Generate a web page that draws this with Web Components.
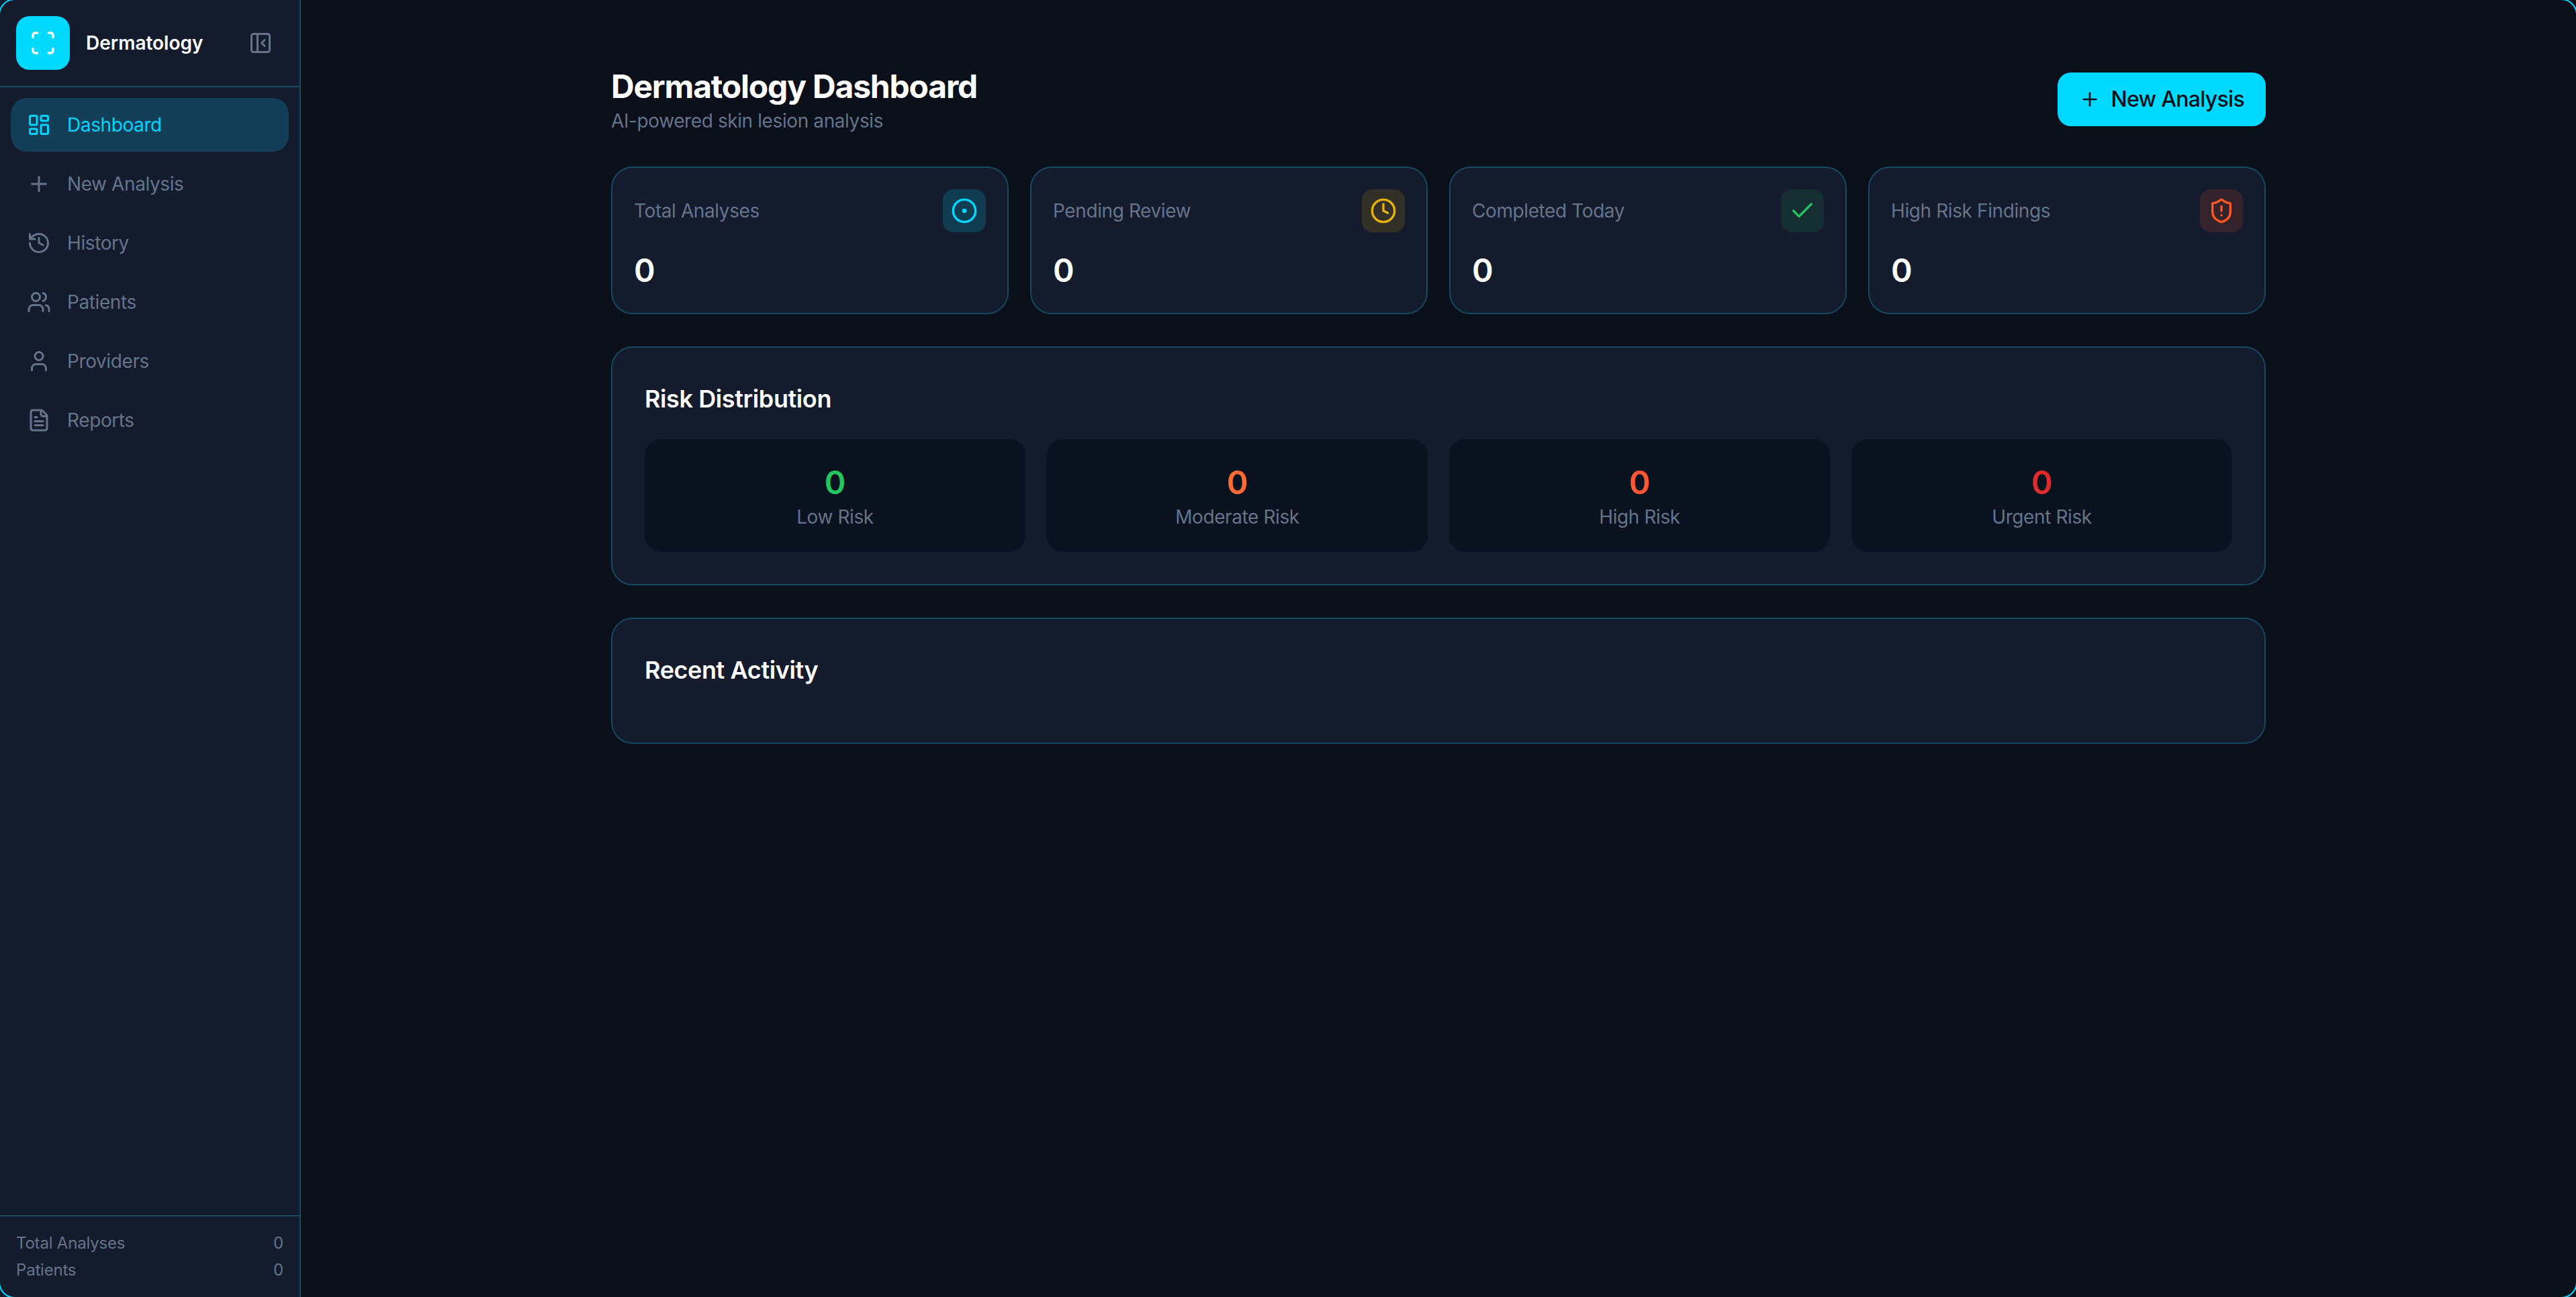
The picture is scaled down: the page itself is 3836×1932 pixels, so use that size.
<!DOCTYPE html>
<html lang="en">
<head>
<meta charset="utf-8">
<title>Dermatology Dashboard</title>
<style>
  html, body { margin: 0; height: 100%; background: #0a0f1a; overflow: hidden; }
  body { font-family: Inter, "Liberation Sans", sans-serif; color: #fff; }
</style>
</head>
<body>
<derm-app></derm-app>

<script>
const ICONS = {
  scan: '<path d="M3 7V5a2 2 0 0 1 2-2h2"/><path d="M17 3h2a2 2 0 0 1 2 2v2"/><path d="M21 17v2a2 2 0 0 1-2 2h-2"/><path d="M7 21H5a2 2 0 0 1-2-2v-2"/>',
  collapse: '<rect width="18" height="18" x="3" y="3" rx="2"/><path d="M9 3v18"/><path d="m16 15-3-3 3-3"/>',
  dashboard: '<rect width="7" height="9" x="3" y="3" rx="1"/><rect width="7" height="5" x="14" y="3" rx="1"/><rect width="7" height="9" x="14" y="12" rx="1"/><rect width="7" height="5" x="3" y="16" rx="1"/>',
  plus: '<path d="M5 12h14"/><path d="M12 5v14"/>',
  history: '<path d="M3 12a9 9 0 1 0 9-9 9.75 9.75 0 0 0-6.74 2.74L3 8"/><path d="M3 3v5h5"/><path d="M12 7v5l4 2"/>',
  users: '<path d="M16 21v-2a4 4 0 0 0-4-4H6a4 4 0 0 0-4 4v2"/><circle cx="9" cy="7" r="4"/><path d="M22 21v-2a4 4 0 0 0-3-3.87"/><path d="M16 3.13a4 4 0 0 1 0 7.75"/>',
  user: '<path d="M19 21v-2a4 4 0 0 0-4-4H9a4 4 0 0 0-4 4v2"/><circle cx="12" cy="7" r="4"/>',
  file: '<path d="M15 2H6a2 2 0 0 0-2 2v16a2 2 0 0 0 2 2h12a2 2 0 0 0 2-2V7Z"/><path d="M14 2v4a2 2 0 0 0 2 2h4"/><path d="M10 9H8"/><path d="M16 13H8"/><path d="M16 17H8"/>',
  target: '<circle cx="12" cy="12" r="10"/><circle cx="12" cy="12" r="1"/>',
  clock: '<circle cx="12" cy="12" r="10"/><path d="M12 6v6l4 2"/>',
  check: '<path d="M20 6 9 17l-5-5"/>',
  shield: '<path d="M20 13c0 5-3.5 7.5-7.66 8.95a1 1 0 0 1-.67-.01C7.5 20.5 4 18 4 13V6a1 1 0 0 1 1-1c2 0 4.5-1.2 6.24-2.72a1.17 1.17 0 0 1 1.52 0C14.51 3.81 17 5 19 5a1 1 0 0 1 1 1z"/><path d="M12 8v4"/><path d="M12 16h.01"/>'
};

function icon(name, size, width = 2) {
  return `<svg xmlns="http://www.w3.org/2000/svg" width="${size}" height="${size}" viewBox="0 0 24 24" fill="none" stroke="currentColor" stroke-width="${width}" stroke-linecap="round" stroke-linejoin="round">${ICONS[name]}</svg>`;
}

class NavItem extends HTMLElement {
  connectedCallback() {
    this.attachShadow({ mode: 'open' });
    this.shadowRoot.innerHTML = `
      <style>
        :host {
          display: flex;
          align-items: center;
          gap: 24px;
          height: 80px;
          padding: 0 24px;
          border-radius: 24px;
          color: #64748b;
          font-size: 28px;
          letter-spacing: -0.4px;
          line-height: 40px;
        }
        :host([active]) { background: #123f57; color: #00d4ff; }
        svg { display: block; flex: none; }
      </style>
      ${icon(this.getAttribute('icon'), 36)}
      <slot></slot>
    `;
  }
}

class StatRow extends HTMLElement {
  connectedCallback() {
    this.attachShadow({ mode: 'open' });
    this.shadowRoot.innerHTML = `
      <style>
        :host {
          display: flex;
          justify-content: space-between;
          color: #64748b;
          font-size: 24px;
          letter-spacing: -0.2px;
          line-height: 32px;
        }
      </style>
      <slot></slot>
      <span>${this.getAttribute('value')}</span>
    `;
  }
}

class SideBar extends HTMLElement {
  connectedCallback() {
    this.attachShadow({ mode: 'open' });
    this.shadowRoot.innerHTML = `
      <style>
        :host {
          display: flex;
          flex-direction: column;
          flex: none;
          box-sizing: border-box;
          width: 448px;
          height: 100%;
          background: #141b2d;
          border-right: 2px solid #134a60;
        }
        header {
          display: flex;
          align-items: center;
          box-sizing: border-box;
          height: 130px;
          padding: 0 24px;
          gap: 24px;
          border-bottom: 2px solid #134a60;
        }
        .logo {
          display: flex;
          align-items: center;
          justify-content: center;
          width: 80px;
          height: 80px;
          border-radius: 20px;
          background: #00d9ff;
          color: #fff;
        }
        .name { flex: 1; font-size: 28px; font-weight: 600; line-height: 40px; }
        .collapse { display: block; margin-right: 16px; color: #64748b; }
        nav { flex: 1; display: flex; flex-direction: column; gap: 8px; padding: 16px; }
        footer {
          display: flex;
          flex-direction: column;
          gap: 8px;
          padding: 24px;
          border-top: 2px solid #134a60;
        }
        svg { display: block; }
      </style>
      <header>
        <div class="logo">${icon('scan', 40)}</div>
        <div class="name">Dermatology</div>
        <div class="collapse">${icon('collapse', 36)}</div>
      </header>
      <nav><slot></slot></nav>
      <footer><slot name="footer"></slot></footer>
    `;
  }
}

class StatCard extends HTMLElement {
  connectedCallback() {
    this.attachShadow({ mode: 'open' });
    const tone = this.getAttribute('tone');
    const wash = this.getAttribute('wash') || 15;
    this.shadowRoot.innerHTML = `
      <style>
        :host {
          display: block;
          box-sizing: border-box;
          padding: 32px;
          background: #141b2d;
          border: 2px solid #134a60;
          border-radius: 32px;
        }
        .top { display: flex; justify-content: space-between; align-items: center; }
        .label { color: #64748b; font-size: 28px; letter-spacing: -0.4px; line-height: 40px; }
        .badge {
          display: flex;
          align-items: center;
          justify-content: center;
          width: 64px;
          height: 64px;
          border-radius: 16px;
          color: ${tone};
          background: color-mix(in srgb, ${tone} ${wash}%, transparent);
        }
        .value { margin: 24px 0 -2px; font-size: 48px; font-weight: 600; line-height: 66px; color: #fff; }
        svg { display: block; }
      </style>
      <div class="top">
        <div class="label"><slot></slot></div>
        <div class="badge">${icon(this.getAttribute('icon'), 40)}</div>
      </div>
      <div class="value">${this.getAttribute('value')}</div>
    `;
  }
}

class RiskTile extends HTMLElement {
  connectedCallback() {
    this.attachShadow({ mode: 'open' });
    this.shadowRoot.innerHTML = `
      <style>
        :host {
          display: block;
          box-sizing: border-box;
          padding: 32px 24px;
          text-align: center;
          background: #0b121f;
          border-radius: 24px;
        }
        .value { margin-bottom: -2px; font-size: 48px; font-weight: 600; line-height: 66px; color: ${this.getAttribute('tone')}; }
        .label { color: #64748b; font-size: 28px; letter-spacing: -0.4px; line-height: 40px; }
      </style>
      <div class="value">${this.getAttribute('value')}</div>
      <div class="label"><slot></slot></div>
    `;
  }
}

class PanelCard extends HTMLElement {
  connectedCallback() {
    this.attachShadow({ mode: 'open' });
    this.shadowRoot.innerHTML = `
      <style>
        :host {
          display: block;
          box-sizing: border-box;
          padding: 48px;
          background: #141b2d;
          border: 2px solid #134a60;
          border-radius: 32px;
        }
        h2 { margin: 0 0 32px; font-size: 36px; font-weight: 600; letter-spacing: -0.4px; line-height: 56px; color: #fff; }
        .body { display: grid; grid-template-columns: repeat(4, 1fr); gap: 32px; }
      </style>
      <h2>${this.getAttribute('heading')}</h2>
      <div class="body"><slot></slot></div>
    `;
  }
}

class PageHeader extends HTMLElement {
  connectedCallback() {
    this.attachShadow({ mode: 'open' });
    this.shadowRoot.innerHTML = `
      <style>
        :host { display: flex; justify-content: space-between; align-items: center; }
        h1 { margin: 0; padding-top: 2px; font-size: 48px; font-weight: 700; letter-spacing: -1.2px; line-height: 62px; color: #fff; }
        p { margin: 0; color: #64748b; font-size: 28px; letter-spacing: -0.4px; line-height: 40px; }
        button {
          display: flex;
          align-items: center;
          gap: 16px;
          height: 80px;
          padding: 0 32px;
          border: 0;
          border-radius: 20px;
          background: #00d9ff;
          color: #0a0e17;
          font: 500 32px/48px Inter, "Liberation Sans", sans-serif;
          letter-spacing: -0.7px;
        }
        svg { display: block; }
      </style>
      <div>
        <h1>Dermatology Dashboard</h1>
        <p>AI-powered skin lesion analysis</p>
      </div>
      <button>${icon('plus', 32)}New Analysis</button>
    `;
  }
}

class DermApp extends HTMLElement {
  connectedCallback() {
    this.attachShadow({ mode: 'open' });
    this.shadowRoot.innerHTML = `
      <style>
        :host { display: flex; position: relative; height: 1932px; background: #0a0f1a; overflow: hidden; }
        main { flex: 1; min-width: 0; padding: 96px 48px; }
        .content { display: flex; flex-direction: column; gap: 48px; width: 2464px; margin: 0 auto; }
        /* window outline, only its rounded corners show inside the viewport */
        .frame {
          position: absolute;
          inset: -2px;
          border: 2px solid #00d9ff;
          border-radius: 24px;
          pointer-events: none;
        }
      </style>
      <slot name="side"></slot>
      <main>
        <div class="content"><slot></slot></div>
      </main>
      <div class="frame"></div>
    `;
  }
}

customElements.define('nav-item', NavItem);
customElements.define('stat-row', StatRow);
customElements.define('side-bar', SideBar);
customElements.define('stat-card', StatCard);
customElements.define('risk-tile', RiskTile);
customElements.define('panel-card', PanelCard);
customElements.define('page-header', PageHeader);
customElements.define('derm-app', DermApp);

document.querySelector('derm-app').innerHTML = `
  <side-bar slot="side">
    <nav-item icon="dashboard" active>Dashboard</nav-item>
    <nav-item icon="plus">New Analysis</nav-item>
    <nav-item icon="history">History</nav-item>
    <nav-item icon="users">Patients</nav-item>
    <nav-item icon="user">Providers</nav-item>
    <nav-item icon="file">Reports</nav-item>
    <stat-row slot="footer" value="0">Total Analyses</stat-row>
    <stat-row slot="footer" value="0">Patients</stat-row>
  </side-bar>
  <page-header></page-header>
  <div style="display:grid;grid-template-columns:repeat(4,1fr);gap:32px">
    <stat-card icon="target" tone="#00d9ff" wash="18" value="0">Total Analyses</stat-card>
    <stat-card icon="clock" tone="#eab308" wash="14" value="0">Pending Review</stat-card>
    <stat-card icon="check" tone="#22c55e" wash="11" value="0">Completed Today</stat-card>
    <stat-card icon="shield" tone="#ff5722" wash="14" value="0">High Risk Findings</stat-card>
  </div>
  <panel-card heading="Risk Distribution">
    <risk-tile tone="#22c55e" value="0">Low Risk</risk-tile>
    <risk-tile tone="#ff6b35" value="0">Moderate Risk</risk-tile>
    <risk-tile tone="#ff5733" value="0">High Risk</risk-tile>
    <risk-tile tone="#dc2c2c" value="0">Urgent Risk</risk-tile>
  </panel-card>
  <panel-card heading="Recent Activity"></panel-card>
`;
</script>
</body>
</html>
